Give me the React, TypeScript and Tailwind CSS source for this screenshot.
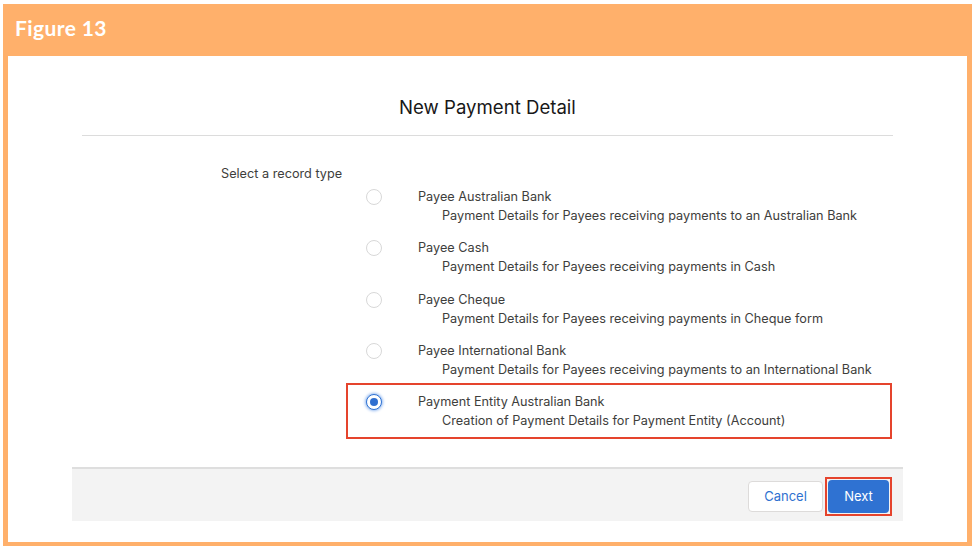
const options = [
  {
    title: "Payee Australian Bank",
    desc: "Payment Details for Payees receiving payments to an Australian Bank",
  },
  {
    title: "Payee Cash",
    desc: "Payment Details for Payees receiving payments in Cash",
  },
  {
    title: "Payee Cheque",
    desc: "Payment Details for Payees receiving payments in Cheque form",
  },
  {
    title: "Payee International Bank",
    desc: "Payment Details for Payees receiving payments to an International Bank",
  },
  {
    title: "Payment Entity Australian Bank",
    desc: "Creation of Payment Details for Payment Entity (Account)",
    selected: true,
  },
];

function Radio({ checked }: { checked?: boolean }) {
  if (checked) {
    return (
      <span className="flex h-[16px] w-[16px] items-center justify-center rounded-full border border-[#2f72d3] bg-white shadow-[0_0_3px_1px_#8fb6ef]">
        <span className="h-[8px] w-[8px] rounded-full bg-[#2f6fd0]" />
      </span>
    );
  }
  return (
    <span className="block h-[16px] w-[16px] rounded-full border border-[#d8d8d8] bg-white" />
  );
}

export default function App() {
  return (
    <div className="h-[550px] w-[976px] bg-white pl-[3px] pt-[4px] font-['Inter',sans-serif]">
      <div className="flex h-[542px] w-[969px] flex-col bg-[#ffb06b]">
        <div className="flex h-[52px] items-center px-[12px] pb-[4px]">
          <span className="font-['Lato',sans-serif] text-[21px] font-bold tracking-[0.4px] text-white">
            Figure 13
          </span>
        </div>

        <div className="mx-[5px] mb-[4px] flex flex-1 flex-col bg-white">
          <h1 className="mt-[37px] text-center text-[18.6px] leading-[28px] text-[#181818]">
            New Payment Detail
          </h1>
          <div className="mx-[74px] mt-[14px] h-px bg-[#dcdcdc]" />

          <div className="mt-[30px] pl-[213px] text-[12.7px] leading-[16px] text-[#3e3e3c]">
            Select a record type
          </div>

          <div className="mt-[6px] text-[12.7px] leading-[18px] text-[#3e3e3c]">
            {options.map((o) => (
              <div key={o.title} className="relative h-[51.25px] pl-[358px]">
                {o.selected && (
                  <div className="absolute left-[338px] top-[-10px] h-[56px] w-[546px] border-2 border-[#e5442d]" />
                )}
                <div className="flex">
                  <div className="flex h-[18px] w-[52px] items-center">
                    <Radio checked={o.selected} />
                  </div>
                  <div>
                    <div>{o.title}</div>
                    <div className="pl-[24px] pt-[1px]">{o.desc}</div>
                  </div>
                </div>
              </div>
            ))}
          </div>

          <div className="mx-[64px] mb-[21px] mt-auto flex h-[54px] items-center justify-end gap-[2px] border-t-2 border-[#dedede] bg-[#f3f3f3] pr-[11px] pt-[3px]">
            <button className="h-[31px] w-[75px] rounded-[4px] border border-[#dddbda] bg-white text-[13px] text-[#2f71d0]">
              Cancel
            </button>
            <span className="border-2 border-[#e5442d] p-[1px]">
              <button className="block h-[33px] w-[61px] rounded-[4px] bg-[#2f72d2] text-[13px] text-white">
                Next
              </button>
            </span>
          </div>
        </div>
      </div>
    </div>
  );
}
